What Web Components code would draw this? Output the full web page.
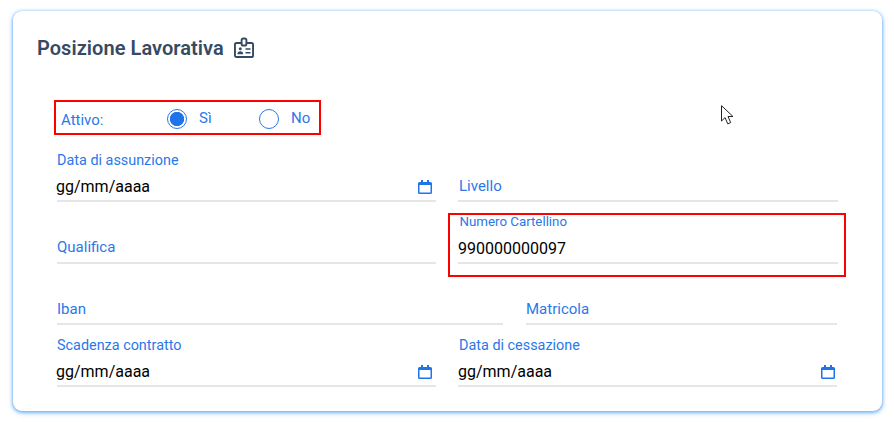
<!DOCTYPE html>
<html lang="it">
<head>
<meta charset="utf-8">
<title>Posizione Lavorativa</title>
<style>
    html, body { margin: 0; padding: 0; background: #fff; }
    body { width: 894px; height: 422px; overflow: hidden; font-family: Roboto, "Liberation Sans", sans-serif; }
</style>
</head>
<body>

<hr-card heading="Posizione Lavorativa">
    <red-box slot="attivo" class="attivo">
        <hr-radios></hr-radios>
    </red-box>
    <hr-row slot="rows" columns="379px 380px" gap="22px" top="0">
        <hr-field label="Data di assunzione" value="gg/mm/aaaa" date></hr-field>
        <hr-field label="Livello" right></hr-field>
    </hr-row>
    <hr-row slot="rows" columns="379px 380px" gap="22px" top="10px">
        <hr-field label="Qualifica" style="--label-top: 25px"></hr-field>
        <hr-field label="Numero Cartellino" value="990000000097" small boxed></hr-field>
    </hr-row>
    <hr-row slot="rows" columns="446px 311px" gap="23px" top="9px">
        <hr-field label="Iban"></hr-field>
        <hr-field label="Matricola"></hr-field>
    </hr-row>
    <hr-row slot="rows" columns="379px 379px" gap="22px" top="10px">
        <hr-field label="Scadenza contratto" value="gg/mm/aaaa" date></hr-field>
        <hr-field label="Data di cessazione" value="gg/mm/aaaa" date right></hr-field>
    </hr-row>
</hr-card>

<script>
class HrCard extends HTMLElement {
    constructor() {
        super();
        this.attachShadow({ mode: 'open' });
        this.shadowRoot.innerHTML = `
        <style>
            :host {
                display: block;
                position: relative;
                box-sizing: border-box;
                width: 869px;
                height: 400px;
                margin: 11px 0 0 13px;
                background: #fff;
                border-radius: 9px;
                box-shadow: 0 1px 3px 1px rgba(66, 153, 245, 0.6), 0 2px 6px rgba(66, 153, 245, 0.25);
            }
            header {
                display: flex;
                align-items: center;
                gap: 9px;
                padding: 25px 0 0 24px;
                height: 24px;
                color: #364a63;
                font-size: 20px;
                font-weight: 600;
                letter-spacing: 0.05px;
                line-height: 24px;
            }
            svg { display: block; }
            .attivo { padding: 40px 0 0 41px; height: 50px; }
            .rows { padding-left: 44px; }
            .cursor { position: absolute; left: 708px; top: 94px; }
        </style>
        <header>
            <span class="title"></span>
            <svg width="22" height="22" viewBox="0 0 22 22" fill="none" stroke="#364a63" stroke-width="1.900">
                <rect x="1.950" y="6" width="18.100" height="14" rx="1.600"/>
                <rect x="8.600" y="1.500" width="4.800" height="7" rx="1.600" fill="#fff"/>
                <circle cx="7.300" cy="11.800" r="1.500" fill="#364a63" stroke="none"/>
                <path d="M4.400 17.200c0-2.200 1.200-3 2.900-3s2.900.8 2.900 3z" fill="#364a63" stroke="none"/>
                <path d="M12.500 12h5M12.500 15.800h5" stroke-width="1.500"/>
            </svg>
        </header>
        <div class="attivo"><slot name="attivo"></slot></div>
        <div class="rows"><slot name="rows"></slot></div>
        <svg class="cursor" width="14" height="20" viewBox="0 0 14 20">
            <path d="M0.500 0.700V16l3.600-3.400 2.700 6.300 2.900-1.300-2.700-6.100h5z" fill="#fff" stroke="#222" stroke-width="1"/>
        </svg>`;
        this.shadowRoot.querySelector('.title').textContent = this.getAttribute('heading');
    }
}

class RedBox extends HTMLElement {
    constructor() {
        super();
        this.attachShadow({ mode: 'open' });
        this.shadowRoot.innerHTML = `
        <style>
            :host {
                display: block;
                box-sizing: border-box;
                width: 267px;
                height: 35px;
                border: 2px solid #f00;
            }
        </style>
        <slot></slot>`;
    }
}

class HrRadios extends HTMLElement {
    constructor() {
        super();
        this.attachShadow({ mode: 'open' });
        this.shadowRoot.innerHTML = `
        <style>
            :host {
                display: flex;
                align-items: center;
                height: 31px;
                color: #2a78ea;
                font-size: 15px;
            }
            .label { width: 105px; padding-left: 5px; box-sizing: border-box; position: relative; top: 2px; }
            .opt { display: flex; align-items: center; gap: 12px; }
            .si { width: 92px; }
            .dot {
                box-sizing: border-box;
                width: 20px;
                height: 20px;
                border-radius: 50%;
                border: 1.500px solid #2a78ea;
                background: #fff;
                position: relative;
                top: 1px;
            }
            .dot.on { background: radial-gradient(circle, #1f74ea 0 6.800px, #fff 7.500px); }
            .gap { width: 6px; }
        </style>
        <div class="label">Attivo:</div>
        <div class="gap"></div>
        <div class="opt si"><div class="dot on"></div><span>Sì</span></div>
        <div class="opt no"><div class="dot"></div><span>No</span></div>`;
    }
}

class HrRow extends HTMLElement {
    constructor() {
        super();
        this.attachShadow({ mode: 'open' });
        this.shadowRoot.innerHTML = `
        <style>
            :host {
                display: grid;
                grid-template-columns: ${this.getAttribute('columns')};
                column-gap: ${this.getAttribute('gap')};
                margin-top: ${this.getAttribute('top')};
            }
        </style>
        <slot></slot>`;
    }
}

class HrField extends HTMLElement {
    constructor() {
        super();
        this.attachShadow({ mode: 'open' });
        const label = this.getAttribute('label');
        const value = this.getAttribute('value');
        const date = this.hasAttribute('date');
        this.shadowRoot.innerHTML = `
        <style>
            :host {
                display: block;
                position: relative;
                box-sizing: border-box;
                height: 52px;
                border-bottom: 2px solid #e6e6e6;
            }
            .label {
                position: absolute;
                left: 0;
                top: var(--label-top, 26px);
                color: #2a78ea;
                font-size: 15px;
                line-height: 20px;
            }
            :host([right]) .label { left: 1px; }
            :host([value]) .label { top: 1px; font-size: 14.400px; }
            :host([small]) .label { top: 0; font-size: 13.300px; left: 1.500px; }
            .value {
                position: absolute;
                left: -1px;
                bottom: 3px;
                color: #000;
                font-size: 16px;
                line-height: 20px;
            }
            :host([right]) .value { left: 0; }
            :host([small]) .value { left: 0; }
            svg { position: absolute; right: 4px; bottom: 6px; }
            :host([right]) svg { right: 2px; }
            .box {
                position: absolute;
                left: -10px;
                right: -8px;
                top: 1px;
                bottom: -15px;
                border: 2px solid #f00;
                box-sizing: border-box;
            }
        </style>
        <div class="label"></div>
        ${value ? '<div class="value"></div>' : ''}
        ${date ? `<svg width="14" height="14" viewBox="0 0 14 14">
            <path d="M3 0h2v2h4V0h2v2h1.500A1.500 1.500 0 0 1 14 3.500v9a1.500 1.500 0 0 1-1.500 1.500h-11A1.500 1.500 0 0 1 0 12.500v-9A1.500 1.500 0 0 1 1.500 2H3zM1.500 5v7.500h11V5z" fill="#1f74ea"/>
        </svg>` : ''}
        ${this.hasAttribute('boxed') ? '<div class="box"></div>' : ''}`;
        this.shadowRoot.querySelector('.label').textContent = label;
        if (value) this.shadowRoot.querySelector('.value').textContent = value;
    }
}

customElements.define('hr-card', HrCard);
customElements.define('red-box', RedBox);
customElements.define('hr-radios', HrRadios);
customElements.define('hr-row', HrRow);
customElements.define('hr-field', HrField);
</script>
</body>
</html>
